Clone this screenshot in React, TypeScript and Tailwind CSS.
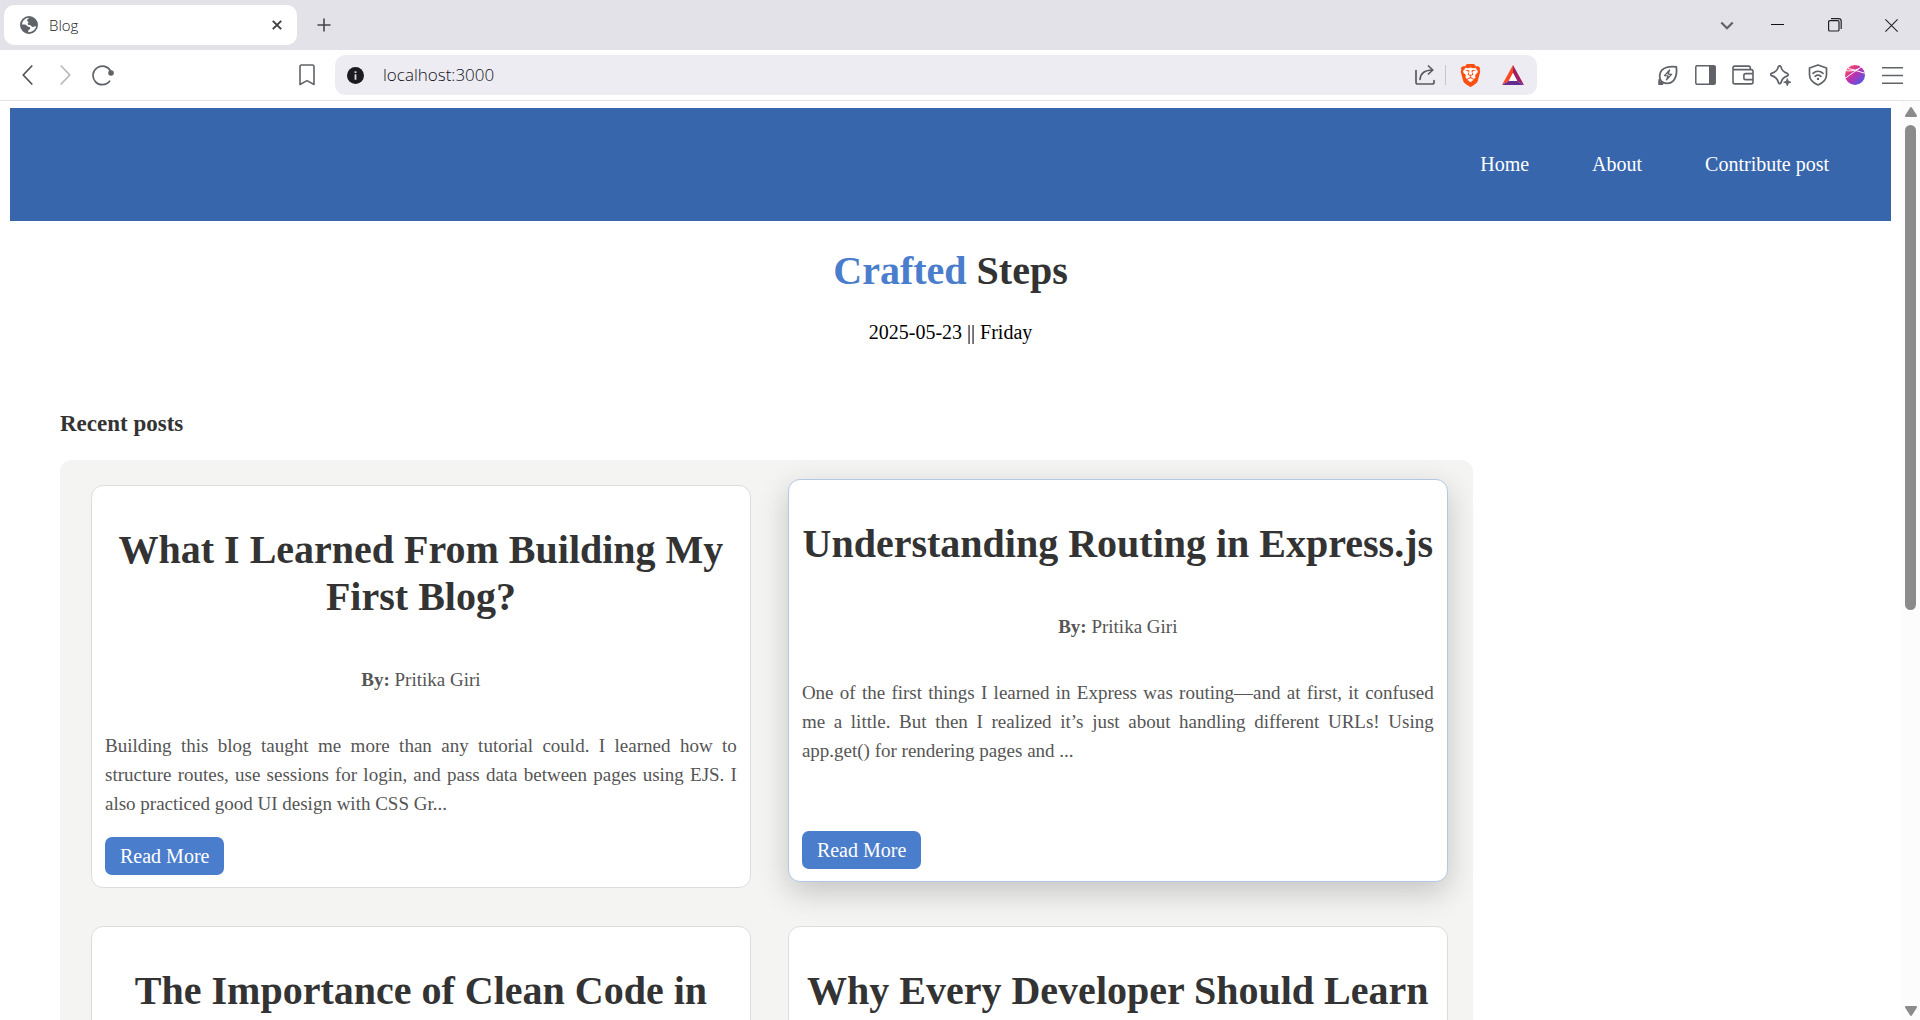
import type { ReactNode } from "react";
import { SiBrave } from "react-icons/si";

type Post = {
  title: string;
  author?: string;
  excerpt?: string;
  active?: boolean;
};

const posts: Post[] = [
  {
    title: "What I Learned From Building My First Blog?",
    author: "Pritika Giri",
    excerpt:
      "Building this blog taught me more than any tutorial could. I learned how to structure routes, use sessions for login, and pass data between pages using EJS. I also practiced good UI design with CSS Gr...",
  },
  {
    title: "Understanding Routing in Express.js",
    author: "Pritika Giri",
    excerpt:
      "One of the first things I learned in Express was routing—and at first, it confused me a little. But then I realized it’s just about handling different URLs! Using app.get() for rendering pages and ...",
    active: true,
  },
  { title: "The Importance of Clean Code in" },
  { title: "Why Every Developer Should Learn" },
];

function IconButton({ label, className, children }: { label: string; className: string; children: ReactNode }) {
  return (
    <button type="button" aria-label={label} className={`flex shrink-0 items-center justify-center ${className}`}>
      {children}
    </button>
  );
}

function TabStrip() {
  return (
    <div className="flex h-[50px] shrink-0 items-center bg-[#e3e2e8] pl-1">
      <div className="flex h-10 w-[293px] items-center rounded-[10px] bg-white pr-3 pl-4">
        <svg width="18" height="18" viewBox="0 0 18 18" aria-hidden="true">
          <circle cx="9" cy="9" r="8.100" fill="#fff" stroke="#5f6368" strokeWidth="1.800" />
          <path
            d="M9.200 1.500c-.3 1.300-2.200 1.500-2.200 2.900 0 1 1.500.9 1.500 1.900 0 .8-.9 1-.9 1.700 0 .9 1.200 1 2 1.100 1.500.2 1.500 1.800 3.200 1.800 1.500 0 2.100-1 3.700-1L16.800 7C15.800 3.600 12.800 1.200 9.200 1.500z"
            fill="#5f6368"
          />
          <path
            d="M1.200 8.600h3.300c2.200 0 2.100 1.900 4 2.100 1.300.2 1.900.8 1.700 1.800-.2 1.200-1.800 1-1.900 2.200l-.1 2C4.300 16.700 1 13.300 1.200 8.600z"
            fill="#5f6368"
          />
        </svg>
        <span className="ml-[11px] flex-1 text-[15px] leading-5 font-light text-[#202124]">Blog</span>
        <IconButton label="Close tab" className="h-5 w-4">
          <svg width="10" height="10" viewBox="0 0 10 10" stroke="#3c4043" strokeWidth="1.900" aria-hidden="true">
            <path d="M.8.8l8.400 8.400M9.200.8L.8 9.200" />
          </svg>
        </IconButton>
      </div>
      <IconButton label="New tab" className="ml-[15px] h-6 w-6">
        <svg width="14" height="14" viewBox="0 0 14 14" stroke="#45474b" strokeWidth="1.600" aria-hidden="true">
          <path d="M7 .5v13M.5 7h13" />
        </svg>
      </IconButton>
      <div className="ml-auto flex items-center">
        <IconButton label="Search tabs" className="h-10 w-11">
          <svg width="14" height="9" viewBox="0 0 14 9" fill="none" stroke="#5f6368" strokeWidth="2.200" aria-hidden="true">
            <path d="M1.300 1.500L7 7.200l5.700-5.700" />
          </svg>
        </IconButton>
        <IconButton label="Minimize" className="h-10 w-[57px]">
          <svg width="13" height="13" viewBox="0 0 13 13" aria-hidden="true">
            <path d="M0 5h13v1H0z" fill="#111" />
          </svg>
        </IconButton>
        <IconButton label="Restore" className="h-10 w-[57px]">
          <svg width="14" height="14" viewBox="0 0 14 14" fill="none" stroke="#222" strokeWidth="1.200" aria-hidden="true">
            <rect x=".6" y="2.600" width="10.400" height="10.400" rx="1.300" />
            <path d="M3 .6h7.600a2.600 2.600 0 0 1 2.600 2.600V11" />
          </svg>
        </IconButton>
        <IconButton label="Close window" className="h-10 w-[57px]">
          <svg width="13" height="13" viewBox="0 0 13 13" stroke="#222" strokeWidth="1.100" aria-hidden="true">
            <path d="M.4.4l12.200 12.200M12.600.4L.4 12.600" />
          </svg>
        </IconButton>
      </div>
    </div>
  );
}

function Toolbar() {
  return (
    <div className="flex h-[51px] shrink-0 items-center border-b border-[#e3e2e8] bg-white">
      <div className="flex w-[335px] items-center pr-2.5 pl-[9px]">
        <IconButton label="Back" className="h-9 w-[37px]">
          <svg width="11" height="20" viewBox="0 0 11 20" fill="none" stroke="#4f5257" strokeWidth="1.700" strokeLinecap="round" strokeLinejoin="round" aria-hidden="true">
            <path d="M9.800 1L1.200 10l8.600 9" />
          </svg>
        </IconButton>
        <IconButton label="Forward" className="h-9 w-[38px]">
          <svg width="11" height="20" viewBox="0 0 11 20" fill="none" stroke="#b7b8bb" strokeWidth="1.700" strokeLinecap="round" strokeLinejoin="round" aria-hidden="true">
            <path d="M1.200 1l8.600 9-8.600 9" />
          </svg>
        </IconButton>
        <IconButton label="Reload" className="h-9 w-[37px]">
          <svg width="22" height="22" viewBox="0 0 22 22" fill="none" stroke="#5f6368" strokeWidth="1.700" strokeLinecap="round" aria-hidden="true">
            <path d="M18.600 7.200A9.300 9.300 0 1 0 17.600 17.200" />
            <circle cx="19" cy="9" r="2.800" fill="#5f6368" stroke="none" />
          </svg>
        </IconButton>
        <IconButton label="Bookmark this page" className="ml-auto h-9 w-[37px]">
          <svg width="16" height="22" viewBox="0 0 16 22" fill="none" stroke="#5f6368" strokeWidth="1.600" strokeLinejoin="round" aria-hidden="true">
            <path d="M1 20.500V2.600C1 1.600 1.700 1 2.600 1h10.800c.9 0 1.600.6 1.600 1.600v17.900L8 16.600z" />
          </svg>
        </IconButton>
      </div>

      <div className="flex h-10 min-w-0 flex-1 items-center rounded-[10px] bg-[#edecf2] pr-2 pl-3">
        <IconButton label="View site information" className="h-6 w-4">
          <svg width="17" height="17" viewBox="0 0 17 17" className="shrink-0" aria-hidden="true">
            <circle cx="8.500" cy="8.500" r="8.500" fill="#1b1b20" />
            <path d="M7.600 4.200h1.800V6H7.600zM7.600 7.200h1.800v5.600H7.600z" fill="#dcdce2" />
          </svg>
        </IconButton>
        <input
          type="text"
          aria-label="Address"
          defaultValue="localhost:3000"
          className="ml-5 min-w-0 flex-1 bg-transparent text-[17px] leading-6 font-light text-[#111118] outline-none"
        />
        <IconButton label="Share" className="h-9 w-8">
          <svg width="20" height="20" viewBox="0 0 20 20" fill="none" stroke="#5a5a60" strokeWidth="1.700" strokeLinecap="round" strokeLinejoin="round" aria-hidden="true">
            <path d="M1 5.500v11.700c0 1.200.6 1.800 1.800 1.800h14.400c1.200 0 1.800-.6 1.800-1.800v-1.700" />
            <path d="M5 14.500C5.500 8.500 9.500 5 17.500 5M13.500 1l4.300 4-4.300 4" />
          </svg>
        </IconButton>
        <span className="mx-1 h-5 w-px bg-[#c6c5cb]" />
        <IconButton label="Brave Shields" className="mr-[11px] ml-1 h-9 w-8">
          <span className="grid h-6 w-6 place-items-center bg-[radial-gradient(circle,#ffffff_6px,transparent_7px)]">
            <SiBrave size={23} color="#fb4f10" />
          </span>
        </IconButton>
        <IconButton label="Brave Rewards" className="h-9 w-8">
          <svg width="22" height="20" viewBox="0 0 22 20" aria-hidden="true">
            <path d="M11 0L0 20l6.800-4L11 8z" fill="#fb4a22" />
            <path d="M11 0l11 20-6.800-4L11 8z" fill="#9e1f63" />
            <path d="M0 20h22l-6.800-4H6.800z" fill="#662d91" />
            <path d="M11 8l4.200 8H6.800z" fill="#fff" />
          </svg>
        </IconButton>
      </div>

      <div className="flex w-[383px] justify-end pr-[9px]">
        <div className="flex w-[262px] items-center justify-between">
          <IconButton label="Memory saver" className="h-9 w-[37px]">
            <svg width="20" height="20" viewBox="0 0 20 20" fill="none" stroke="#5f6368" strokeWidth="1.800" strokeLinecap="round" strokeLinejoin="round" aria-hidden="true">
              <path d="M3.600 16.400C.9 13.500 1 8.300 3.900 5.200 7 2 12 1.200 18.300 1.900c.8 6.100-.3 11.200-3.300 14.200-3.100 3-8.500 3.200-11.400.3zM3.600 16.400L1 19M1.200 15v4h3.200" />
              <path d="M11.600 5l-5.100 5.600 3.500.3-1.500 4 5.100-5.600-3.500-.3z" strokeWidth="1.300" />
            </svg>
          </IconButton>
          <IconButton label="Sidebar" className="h-9 w-[37px]">
            <svg width="21" height="20" viewBox="0 0 21 20" aria-hidden="true">
              <rect x=".8" y=".8" width="19.400" height="18.400" rx="1.200" fill="none" stroke="#5f6368" strokeWidth="1.500" />
              <path d="M14 1h6v18h-6z" fill="#5f6368" />
            </svg>
          </IconButton>
          <IconButton label="Wallet" className="h-9 w-[37px]">
            <svg width="22" height="20" viewBox="0 0 22 20" fill="none" stroke="#5f6368" strokeWidth="1.600" strokeLinejoin="round" aria-hidden="true">
              <path d="M18.300 4.600V2.800c0-1.100-.6-1.700-1.700-1.700H2.700C1.600 1.100 1 1.700 1 2.800v14.300c0 1.100.7 1.800 1.800 1.800h16.400c1.100 0 1.800-.7 1.800-1.800V6.400c0-1.100-.7-1.800-1.800-1.800H1" />
              <path d="M21 8.600h-7.400c-1 0-1.700.7-1.700 1.700v2.600c0 1 .7 1.700 1.700 1.700H21" />
            </svg>
          </IconButton>
          <IconButton label="Leo AI" className="h-9 w-[37px]">
            <svg width="21" height="21" viewBox="0 0 21 21" fill="none" stroke="#5f6368" strokeWidth="1.700" strokeLinejoin="round" aria-hidden="true">
              <path d="M8.300 1.700c.7-1.200 2-1.200 2.600 0 .7 3.700 2.100 5.300 6.400 6.700 1.300.7 1.300 1.800 0 2.500-3.300 1.100-5.300 2.500-6.200 6.500-.6 1.700-2.200 1.700-2.800 0-.9-4-2.800-5.700-6.700-6.800-1.200-.5-1.200-1.700 0-2.200 4.100-1.200 6-2.800 6.700-6.700z" />
              <path d="M17.300 13.500l1 2.700 2.700 1-2.700 1-1 2.700-1-2.700-2.700-1 2.700-1z" fill="#5f6368" strokeWidth=".8" />
            </svg>
          </IconButton>
          <IconButton label="VPN" className="h-9 w-[37px]">
            <svg width="20" height="22" viewBox="0 0 20 22" fill="none" stroke="#5f6368" strokeWidth="1.700" strokeLinecap="round" strokeLinejoin="round" aria-hidden="true">
              <path d="M10 1l8.500 3v6.800c0 4.600-3.300 8-8.500 10.200-5.200-2.200-8.500-5.600-8.500-10.200V4z" />
              <path d="M5 9.400c3-2.600 7-2.600 10 0M7 12.300c1.800-1.500 4.200-1.500 6 0" />
              <circle cx="10" cy="14.900" r="1.200" fill="#5f6368" stroke="none" />
            </svg>
          </IconButton>
          <IconButton label="Profile" className="h-9 w-[37px]">
            <svg width="20" height="20" viewBox="0 0 20 20" aria-hidden="true">
              <defs>
                <linearGradient id="profile" x1="0.100" y1="0.100" x2="0.900" y2="0.900">
                  <stop offset="0" stopColor="#ff4a5c" />
                  <stop offset=".5" stopColor="#b832b4" />
                  <stop offset="1" stopColor="#4b5be6" />
                </linearGradient>
                <clipPath id="ball">
                  <circle cx="10" cy="10" r="10" />
                </clipPath>
              </defs>
              <g clipPath="url(#ball)" fill="none" stroke="#fff" strokeWidth="1">
                <rect width="20" height="20" fill="url(#profile)" stroke="none" />
                <path d="M0 13.500C6 9 11 5.500 16.500 2M3 3.500c5 1 10 2.700 17 4.800M0 5.500c5 .8 9 .5 14-2" />
              </g>
            </svg>
          </IconButton>
          <IconButton label="Menu" className="h-9 w-[37px]">
            <svg width="21" height="17" viewBox="0 0 21 17" fill="#5f6368" aria-hidden="true">
              <path d="M0 0h21v1.600H0zM0 7.700h21v1.600H0zM0 15.400h21V17H0z" />
            </svg>
          </IconButton>
        </div>
      </div>
    </div>
  );
}

function PostCard({ post }: { post: Post }) {
  return (
    <article
      className={`flex flex-col rounded-xl border bg-white px-[13px] pt-[13px] pb-3 ${
        post.active
          ? "-translate-y-1.5 border-[#b4c7e4] shadow-[0_10px_31px_rgba(0,0,0,0.2)]"
          : "border-[#dddddd]"
      }`}
    >
      <h1 className="mt-[27px] text-center text-[40px] leading-[47px] font-bold text-[#333333]">{post.title}</h1>
      {post.author && (
        <p className="mt-[45px] text-center text-[19px] leading-[29px] text-[#555555]">
          <strong>By:</strong> {post.author}
        </p>
      )}
      {post.excerpt && (
        <p className="mt-[37px] mb-[19px] text-justify text-[19px] leading-[29px] text-[#555555]">{post.excerpt}</p>
      )}
      {post.excerpt && (
        <a
          href="#read"
          className="mt-auto flex h-[38px] items-center self-start rounded-[7px] bg-[#4a7dcb] px-[15px] text-[20px] leading-[23px] text-white"
        >
          Read More
        </a>
      )}
    </article>
  );
}

function ScrollBar() {
  return (
    <div className="flex w-[19px] shrink-0 flex-col items-center bg-[#fcfcfc] pt-1.5 pb-1" aria-hidden="true">
      <svg width="12" height="10" viewBox="0 0 12 10" fill="#8b8b8b">
        <path d="M5 .8a1.200 1.200 0 0 1 2 0l4.800 7.400c.5.9.1 1.800-.9 1.800H1.100C.1 10-.3 9.100.2 8.200z" />
      </svg>
      <div className="mt-2 flex w-[11px] flex-1 flex-col">
        <div className="h-[55%] rounded-full bg-[#8b8b8b]" />
      </div>
      <svg width="12" height="10" viewBox="0 0 12 10" fill="#8b8b8b">
        <path d="M5 9.200a1.200 1.200 0 0 0 2 0l4.800-7.400C12.300.9 11.900 0 10.900 0H1.100C.1 0-.3.9.2 1.800z" />
      </svg>
    </div>
  );
}

export default function App() {
  return (
    <div className="flex h-screen flex-col overflow-hidden bg-white font-['Open_Sans',sans-serif]">
      <TabStrip />
      <Toolbar />
      <div className="flex min-h-0 flex-1">
        <div className="min-w-0 flex-1 overflow-hidden px-2.5 pt-[7px] font-['Liberation_Serif',serif]">
          <nav className="flex h-[113px] items-center justify-end gap-[63px] bg-[#3866ac] pr-[62px] text-[20px] leading-[23px] text-white">
            <a href="#home">Home</a>
            <a href="#about">About</a>
            <a href="#contribute">Contribute post</a>
          </nav>
          <header className="mt-[26px] text-center">
            <h1 className="text-[40px] leading-[47px] font-bold text-[#333333]">
              <span className="text-[#4a7dcb]">Crafted</span> Steps
            </h1>
            <p className="mt-[27px] text-[20px] leading-[23px] text-black">2025-05-23 || Friday</p>
          </header>
          <main className="mt-[66px]">
            <h3 className="ml-[50px] text-[23px] leading-[27px] font-bold text-[#333333]">Recent posts</h3>
            <section className="mt-[23px] ml-[50px] grid w-[calc(75%+2px)] auto-rows-[minmax(403px,auto)] grid-cols-2 gap-x-[37px] gap-y-[38px] rounded-xl bg-[#f4f4f2] pt-[25px] pr-[25px] pb-[25px] pl-[31px]">
              {posts.map((post) => (
                <PostCard key={post.title} post={post} />
              ))}
            </section>
          </main>
        </div>
        <ScrollBar />
      </div>
    </div>
  );
}
